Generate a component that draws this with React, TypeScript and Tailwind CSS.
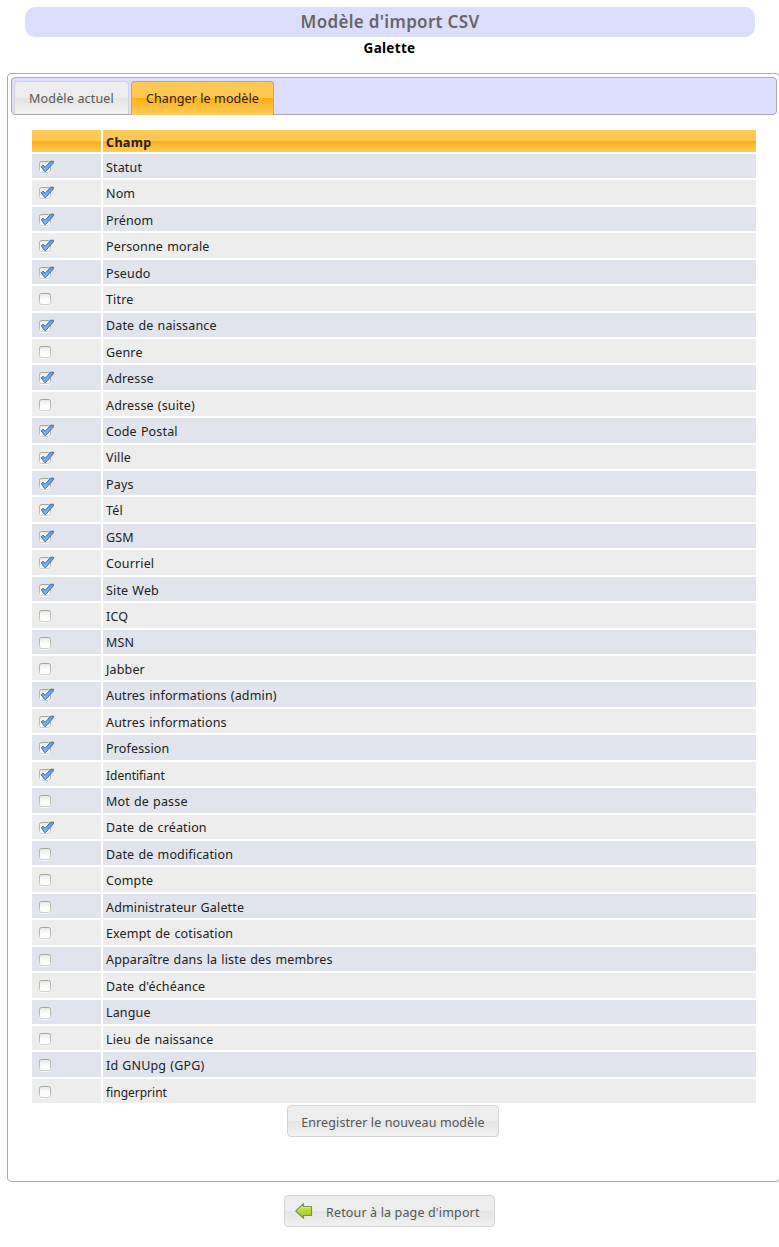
import React from 'react';

const fields: [string, boolean][] = [
  ['Statut', true],
  ['Nom', true],
  ['Prénom', true],
  ['Personne morale', true],
  ['Pseudo', true],
  ['Titre', false],
  ['Date de naissance', true],
  ['Genre', false],
  ['Adresse', true],
  ['Adresse (suite)', false],
  ['Code Postal', true],
  ['Ville', true],
  ['Pays', true],
  ['Tél', true],
  ['GSM', true],
  ['Courriel', true],
  ['Site Web', true],
  ['ICQ', false],
  ['MSN', false],
  ['Jabber', false],
  ['Autres informations (admin)', true],
  ['Autres informations', true],
  ['Profession', true],
  ['Identifiant', true],
  ['Mot de passe', false],
  ['Date de création', true],
  ['Date de modification', false],
  ['Compte', false],
  ['Administrateur Galette', false],
  ['Exempt de cotisation', false],
  ['Apparaître dans la liste des membres', false],
  ["Date d'échéance", false],
  ['Langue', false],
  ['Lieu de naissance', false],
  ['Id GNUpg (GPG)', false],
  ['fingerprint', false],
];

const orange = 'bg-[linear-gradient(#ffc957_0%,#ffc752_49%,#ffb010_50%,#ffcb5f_100%)]';
const grey = 'bg-[linear-gradient(#eeeeee_0%,#ededed_49%,#e4e4e4_50%,#f1f1f1_100%)]';

function CheckBox({ on }: { on: boolean }) {
  return (
    <svg width="17" height="14" viewBox="0 0 17 14" className="block" role="checkbox" aria-checked={on}>
      <defs>
        <linearGradient id="box" x1="0" y1="0" x2="0" y2="1">
          <stop offset="0" stopColor="#e6e6e2" />
          <stop offset="0.5" stopColor="#fbfbfb" />
          <stop offset="1" stopColor="#ffffff" />
        </linearGradient>
        <linearGradient id="edge" x1="0" y1="0" x2="0" y2="1">
          <stop offset="0" stopColor="#a0a892" />
          <stop offset="1" stopColor="#ced0cc" />
        </linearGradient>
        <linearGradient id="tick" x1="0" y1="0" x2="0" y2="1">
          <stop offset="0" stopColor="#5f9cdc" />
          <stop offset="1" stopColor="#85b9ee" />
        </linearGradient>
      </defs>
      <rect x="1.5" y="2.5" width="11" height="11" rx="2" fill="none" stroke="#f8f8f8" />
      <rect x="1.5" y="1.5" width="11" height="11" rx="2" fill="url(#box)" stroke="url(#edge)" />
      {on && (
        <path
          d="M3.2 6.8 5 5.3 7.2 7.2 12.6 1.2 15.6 1.2 15.2 3 7.8 11.4 6.5 11.4Z"
          fill="url(#tick)"
          stroke="#2f69ad"
          strokeWidth="0.9"
          strokeLinejoin="round"
        />
      )}
    </svg>
  );
}

function BackArrow() {
  return (
    <svg width="18" height="16" viewBox="0 0 18 16" className="block">
      <defs>
        <linearGradient id="arrow" x1="0" y1="0" x2="0" y2="1">
          <stop offset="0" stopColor="#d9e85a" />
          <stop offset="1" stopColor="#9dc52a" />
        </linearGradient>
      </defs>
      <path
        d="M.8 8 8.5.8V3.5H16.5V12.5H8.5V15.2Z"
        fill="url(#arrow)"
        stroke="#6f9c44"
        strokeWidth="1.2"
        strokeLinejoin="round"
      />
      <path d="M2.5 8 7.5 3.2V4.6H15.4" fill="none" stroke="#e6ef8a" strokeWidth="0.7" />
    </svg>
  );
}

export default function App() {
  return (
    <div className="flex h-[1247px] w-full flex-col overflow-hidden bg-white font-['Noto_Sans','Open_Sans',sans-serif] text-[12.5px] text-[#212121]">
      <h1 className="mt-[7px] ml-[25px] flex h-[30px] w-[730px] shrink-0 items-center justify-center rounded-[10px] bg-[#ddddff] text-[17px] font-semibold tracking-[0.32px] text-[#666666]">
        Modèle d'import CSV
      </h1>
      <p className="h-[36px] shrink-0 pt-[2px] text-center text-[13.5px] leading-[18px] font-bold tracking-[0.3px] text-black">Galette</p>

      <main className="ml-[7px] flex h-[1109px] w-[773px] shrink-0 flex-col rounded-[4px] border border-[#aaaaaa] p-[3px]">
        <nav className="flex h-[38px] w-[766px] shrink-0 gap-[2px] rounded-[4px] border border-[#aaaaaa] bg-[#ddddff] pt-[3px] pl-[2px]">
          <div className={`flex h-[33px] w-[115px] items-center justify-center rounded-t-[4px] border border-b-0 border-[#d3d3d3] pt-[2px] text-[#555555] ${grey}`}>
            <span className="tracking-[0.17px]">Modèle actuel</span>
          </div>
          <div className={`flex h-[34px] w-[143px] items-center justify-center rounded-t-[4px] border border-b-0 border-[#aaaaaa] pt-[1px] ${orange}`}>
            <span className="tracking-[0.1px]">Changer le modèle</span>
          </div>
        </nav>

        <div className="mt-[15px] ml-[21px] flex w-[724px] flex-col gap-[2px]">
          <div className="flex h-[22px] gap-[2px]">
            <div className={`w-[69px] ${orange}`} />
            <div className={`flex flex-1 items-center pt-[4px] pl-[3px] font-bold tracking-[0.35px] ${orange}`}>Champ</div>
          </div>
          {fields.map(([label, on], i) => (
            <div key={label} className="flex h-[24.43px] gap-[2px]">
              <div className={`w-[69px] pt-[6px] pl-[6px] ${i % 2 ? 'bg-[#ededed]' : 'bg-[#e1e4ed]'}`}>
                <CheckBox on={on} />
              </div>
              <div
                className={`flex flex-1 items-center pt-[4px] pl-[3px] [word-spacing:0.7px] ${
                  label === 'fingerprint' || label === 'Identifiant' ? 'text-[12px] tracking-normal' : 'tracking-[0.15px]'
                } ${i % 2 ? 'bg-[#ededed]' : 'bg-[#e1e4ed]'}`}
              >
                {label}
              </div>
            </div>
          ))}
        </div>

        <button className={`mt-[2px] ml-[276px] flex h-[32px] w-[212px] shrink-0 items-center justify-center rounded-[4px] border border-[#d3d3d3] pt-[4px] tracking-[0.1px] text-[#555555] ${grey}`}>
          Enregistrer le nouveau modèle
        </button>
      </main>

      <a className={`mt-[13px] ml-[284px] flex h-[32px] w-[211px] shrink-0 items-center rounded-[4px] border border-[#d3d3d3] pl-[10px] text-[#555555] ${grey}`}>
        <BackArrow />
        <span className="ml-[13px] pt-[4px] tracking-[0.15px]">Retour à la page d'import</span>
      </a>
    </div>
  );
}
